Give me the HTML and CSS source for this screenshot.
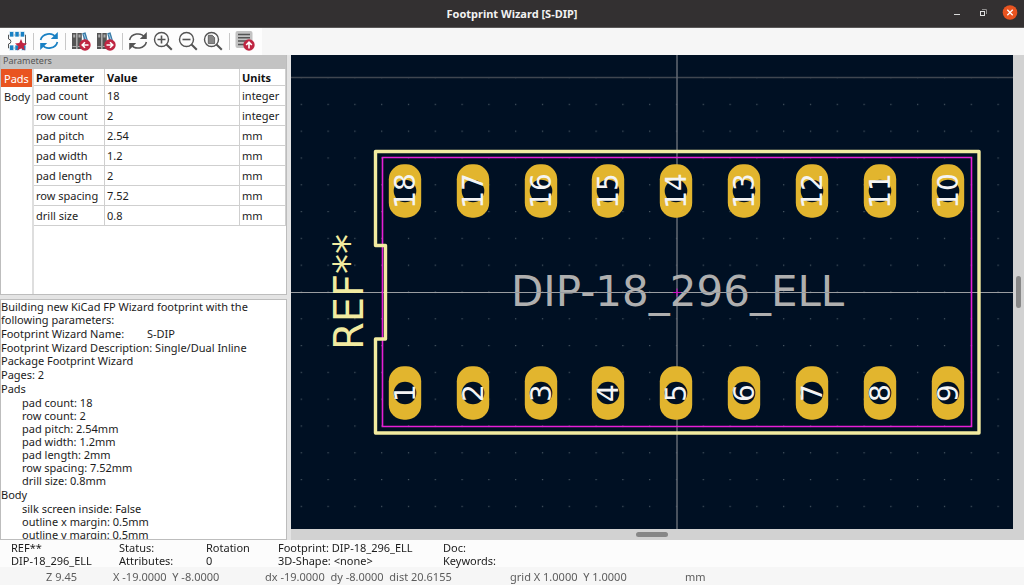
FILE: index.html
```html
<!DOCTYPE html>
<html lang="en">
<head>
<meta charset="utf-8">
<title>Footprint Wizard [S-DIP]</title>
<link rel="stylesheet" href="styles.css">
</head>
<body>
<div class="window">
  <header class="titlebar">
    <h1 class="title">Footprint Wizard [S-DIP]</h1>
    <div class="window-buttons">
      <button class="win-btn" aria-label="Minimize"><svg width="14" height="14" viewBox="0 0 14 14"><path d="M4 8.5h6" stroke="#d8d8d8" stroke-width="1"/></svg></button>
      <button class="win-btn" aria-label="Restore"><svg width="14" height="14" viewBox="0 0 14 14" fill="none"><path d="M6 3.500h4.500V8" stroke="#8f8d8d"/><rect x="4.500" y="5.500" width="4" height="4" stroke="#e0e0e0"/></svg></button>
      <button class="win-btn" aria-label="Close"><svg width="16" height="16" viewBox="0 0 16 16"><circle cx="8" cy="7.500" r="7.300" fill="#e95420"/><path d="M5.300 4.800l5.400 5.400M10.700 4.800l-5.400 5.400" stroke="#fff" stroke-width="1.300"/></svg></button>
    </div>
  </header>

  <nav class="toolbar" aria-label="Main toolbar">
    <button class="tool" aria-label="Select wizard script">
      <svg viewBox="0 0 20 20"><path d="M1.500 4h17v13h-17V13q2.400-.4 2.400-2.500T1.500 8z" fill="none" stroke="#555" stroke-width="1"/><g fill="#1a81c4" stroke="#fdfdfd" stroke-width=".7"><path d="M2.500 .5h4.300v5.500H2.500zM7.900 .5h4.300v5.500H7.900zM13.300 .5h4.300v5.500h-4.300zM2.500 14h4.300v5.500H2.500zM7.900 14h4.300v5.500H7.900zM14.500 14h4.300v5.500h-4.300z"/></g><path d="M14 8l1.700 4 4.300.4-3.200 2.800 1 4.300-3.800-2.300-3.700 2.300 1-4.300L8 12.400l4.300-.4z" fill="#bf2642"/></svg>
    </button>
    <span class="sep"></span>
    <button class="tool" aria-label="Reset parameters">
      <svg viewBox="0 0 20 20"><g fill="none" stroke="#1a81c4" stroke-width="1.700"><path d="M1.600 9A8.500 7.800 0 0 1 17 6.500M18.400 11A8.500 7.800 0 0 1 3 13.500"/></g><path d="M18.800 1v7h-7zM1.200 19v-7h7z" fill="#1a81c4"/></svg>
    </button>
    <span class="sep"></span>
    <button class="tool" aria-label="Previous page">
      <svg viewBox="0 0 20 20"><path d="M1 2h4.500v16H1zM6.300 2h4.500v16H6.300z" fill="#545454"/><path d="M2.200 3.500h2v3h-2zM7.500 3.500h2v3h-2z" fill="#aaa"/><path d="M1.500 15.500h3.500M6.800 15.500h3.500" stroke="#aaa"/><path d="M11.200 2.300l3.300-1L18 13l-3.500 2z" fill="#3a7ca8"/><path d="M13 3l2.500 7" stroke="#9fc8e3"/><circle cx="14" cy="14" r="5.700" fill="#bf2642"/><path d="M17.500 14h-6M14 11.200L11.200 14l2.800 2.800" fill="none" stroke="#fff" stroke-width="1.600"/></svg>
    </button>
    <button class="tool" aria-label="Next page">
      <svg viewBox="0 0 20 20"><path d="M1 2h4.500v16H1zM6.300 2h4.500v16H6.300z" fill="#545454"/><path d="M2.200 3.500h2v3h-2zM7.500 3.500h2v3h-2z" fill="#aaa"/><path d="M1.500 15.500h3.500M6.800 15.500h3.500" stroke="#aaa"/><path d="M11.200 2.300l3.300-1L18 13l-3.500 2z" fill="#3a7ca8"/><path d="M13 3l2.500 7" stroke="#9fc8e3"/><circle cx="14" cy="14" r="5.700" fill="#bf2642"/><path d="M10.500 14h6M14 11.200l2.800 2.800-2.800 2.800" fill="none" stroke="#fff" stroke-width="1.600"/></svg>
    </button>
    <span class="sep"></span>
    <button class="tool" aria-label="Refresh view">
      <svg viewBox="0 0 20 20"><g fill="none" stroke="#545454" stroke-width="1.500"><path d="M1.600 9A8.500 7.800 0 0 1 17 6.500M18.400 11A8.500 7.800 0 0 1 3 13.500"/></g><path d="M18.800 1v7h-7zM1.200 19v-7h7z" fill="#545454"/></svg>
    </button>
    <button class="tool" aria-label="Zoom in">
      <svg viewBox="0 0 20 20" fill="none" stroke="#545454"><circle cx="8.500" cy="8.500" r="7" stroke-width="1.400"/><path d="M8.500 4.500v8M4.500 8.500h8" stroke-width="1.600"/><path d="M13.500 13.500l5.300 5.300" stroke-width="2"/></svg>
    </button>
    <button class="tool" aria-label="Zoom out">
      <svg viewBox="0 0 20 20" fill="none" stroke="#545454"><circle cx="8.500" cy="8.500" r="7" stroke-width="1.400"/><path d="M4.500 8.500h8" stroke-width="1.600"/><path d="M13.500 13.500l5.300 5.300" stroke-width="2"/></svg>
    </button>
    <button class="tool" aria-label="Zoom to fit">
      <svg viewBox="0 0 20 20" fill="none" stroke="#545454"><circle cx="8.500" cy="8.500" r="7" stroke-width="1.400"/><path d="M5.300 4.300h4l2.300 2.300v6H5.300z" fill="#858585" stroke-width=".8"/><path d="M13.500 13.500l5.300 5.300" stroke-width="2"/></svg>
    </button>
    <span class="sep"></span>
    <button class="tool" aria-label="Export footprint to editor">
      <svg viewBox="0 0 20 20"><rect x=".5" y="0" width="17" height="17" rx="2" fill="#c2c2c2"/><path d="M3 3.500h12M3 6.800h12M3 10.100h9M3 13.400h6" stroke="#545454" stroke-width="1.500"/><circle cx="14" cy="14" r="5.700" fill="#bf2642"/><path d="M14 17.500v-6M11.200 14l2.800-2.800 2.800 2.800" fill="none" stroke="#fff" stroke-width="1.600"/></svg>
    </button>
  </nav>

  <main class="workspace">
    <aside class="side">
      <section class="params">
        <h2 class="caption">Parameters</h2>
        <div class="params-body">
          <div class="pages">
            <button class="page selected">Pads</button>
            <button class="page">Body</button>
          </div>
          <div class="grid-wrap">
            <table class="grid">
              <colgroup><col class="col-name"><col class="col-value"><col class="col-units"></colgroup>
              <thead><tr><th>Parameter</th><th>Value</th><th>Units</th></tr></thead>
              <tbody>
                <tr><td>pad count</td><td>18</td><td>integer</td></tr>
                <tr><td>row count</td><td>2</td><td>integer</td></tr>
                <tr><td>pad pitch</td><td>2.54</td><td>mm</td></tr>
                <tr><td>pad width</td><td>1.2</td><td>mm</td></tr>
                <tr><td>pad length</td><td>2</td><td>mm</td></tr>
                <tr><td>row spacing</td><td>7.52</td><td>mm</td></tr>
                <tr><td>drill size</td><td>0.8</td><td>mm</td></tr>
              </tbody>
            </table>
          </div>
        </div>
      </section>
      <section class="log" aria-label="Build messages">
        <p>Building new KiCad FP Wizard footprint with the<br>following parameters:</p>
        <p>Footprint Wizard Name: <span class="tabbed">S-DIP</span></p>
        <p>Footprint Wizard Description: Single/Dual Inline<br>Package Footprint Wizard</p>
        <p>Pages: 2</p>
        <p>Pads</p>
        <ul>
          <li>pad count: 18</li><li>row count: 2</li><li>pad pitch: 2.54mm</li><li>pad width: 1.2mm</li><li>pad length: 2mm</li><li>row spacing: 7.52mm</li><li>drill size: 0.8mm</li>
        </ul>
        <p>Body</p>
        <ul>
          <li>silk screen inside: False</li><li>outline x margin: 0.5mm</li><li>outline y margin: 0.5mm</li>
        </ul>
      </section>
    </aside>

    <section class="view">
      <svg class="board" viewBox="291 55 722 474" preserveAspectRatio="xMidYMid slice" role="img" aria-label="Footprint preview">
        <defs>
          <pattern id="dots" x="663" y="278.500" width="26.800" height="26.800" patternUnits="userSpaceOnUse"><rect x="12.900" y="12.900" width="1.200" height="1.200" fill="#4b5965"/></pattern>
          <g id="pad"><rect x="-16.200" y="-26.700" width="32.400" height="53.400" rx="15" fill="#e2b52e"/><circle r="11.300" fill="#001023"/></g>
        </defs>
        <rect x="291" y="55" width="722" height="474" fill="#001023"/>
        <rect x="291" y="55" width="722" height="474" fill="url(#dots)"/>
        <path d="M291 77.500h722" stroke="#3f4650" stroke-width="1.500"/>
        <path d="M677 55v474" stroke="#626973" stroke-width="1.500"/>
        <text class="fab" x="511" y="306">DIP-18_296_ELL</text>
        <path d="M291 292.500h722" stroke="#9a9da1"/>
        <path d="M382.500 157.500h589v269h-589z" fill="none" stroke="#e61fd6" stroke-width="1.600"/>
        <path d="M375.500 151.500h603.500V433H375.500V339h10V245.500h-10z" fill="none" stroke="#f2eba0" stroke-width="3.400" stroke-linejoin="round"/>
        <path d="M673 292.500h8M677 288.500v8" stroke="#d010c8"/>
        <text class="silk" transform="translate(363 350) rotate(-90)">REF**</text>
        <g class="pads">
          <g transform="translate(405 191)"><use href="#pad"/><text transform="rotate(-90)" y="10">18</text></g>
          <g transform="translate(473 191)"><use href="#pad"/><text transform="rotate(-90)" y="10">17</text></g>
          <g transform="translate(541 191)"><use href="#pad"/><text transform="rotate(-90)" y="10">16</text></g>
          <g transform="translate(608 191)"><use href="#pad"/><text transform="rotate(-90)" y="10">15</text></g>
          <g transform="translate(676 191)"><use href="#pad"/><text transform="rotate(-90)" y="10">14</text></g>
          <g transform="translate(744 191)"><use href="#pad"/><text transform="rotate(-90)" y="10">13</text></g>
          <g transform="translate(812 191)"><use href="#pad"/><text transform="rotate(-90)" y="10">12</text></g>
          <g transform="translate(880 191)"><use href="#pad"/><text transform="rotate(-90)" y="10">11</text></g>
          <g transform="translate(948 191)"><use href="#pad"/><text transform="rotate(-90)" y="10">10</text></g>
          <g transform="translate(405 393)"><use href="#pad"/><text transform="rotate(-90)" y="10">1</text></g>
          <g transform="translate(473 393)"><use href="#pad"/><text transform="rotate(-90)" y="10">2</text></g>
          <g transform="translate(541 393)"><use href="#pad"/><text transform="rotate(-90)" y="10">3</text></g>
          <g transform="translate(608 393)"><use href="#pad"/><text transform="rotate(-90)" y="10">4</text></g>
          <g transform="translate(676 393)"><use href="#pad"/><text transform="rotate(-90)" y="10">5</text></g>
          <g transform="translate(744 393)"><use href="#pad"/><text transform="rotate(-90)" y="10">6</text></g>
          <g transform="translate(812 393)"><use href="#pad"/><text transform="rotate(-90)" y="10">7</text></g>
          <g transform="translate(880 393)"><use href="#pad"/><text transform="rotate(-90)" y="10">8</text></g>
          <g transform="translate(948 393)"><use href="#pad"/><text transform="rotate(-90)" y="10">9</text></g>
        </g>
      </svg>
      <div class="vscroll"><span class="thumb"></span></div>
      <div class="hscroll"><span class="thumb"></span></div>
    </section>
  </main>

  <section class="info">
    <div><p>REF**</p><p>DIP-18_296_ELL</p></div>
    <div><p>Status:</p><p>Attributes:</p></div>
    <div><p>Rotation</p><p>0</p></div>
    <div><p>Footprint: DIP-18_296_ELL</p><p>3D-Shape: &lt;none&gt;</p></div>
    <div><p>Doc:</p><p>Keywords:</p></div>
  </section>
  <footer class="status">
    <span>Z 9.45</span><span>X -19.0000&nbsp; Y -8.0000</span><span>dx -19.0000&nbsp; dy -8.0000&nbsp; dist 20.6155</span><span>grid X 1.0000&nbsp; Y 1.0000</span><span>mm</span>
  </footer>
</div>
</body>
</html>
```
FILE: styles.css
```css
* { box-sizing: border-box; }
body, h1, h2, p, ul { margin: 0; padding: 0; }
body {
  font-family: "Noto Sans", "Open Sans", sans-serif;
  font-size: 11px;
  line-height: 13px;
  color: #1c1c1c;
  background: #f6f6f6;
}
button { font: inherit; color: inherit; border: 0; padding: 0; background: none; }
ul { list-style: none; }
svg { display: block; }

.window { display: flex; flex-direction: column; height: 100vh; }

.titlebar {
  display: grid;
  grid-template-columns: 1fr auto 1fr;
  align-items: center;
  height: 28px;
  padding-bottom: 1px;
  background: #333031;
  border-bottom: 1px solid #5a5858;
  color: #f2f2f2;
}
.title { grid-column: 2; font-size: 11px; font-weight: 700; }
.window-buttons { display: flex; justify-content: flex-end; align-items: center; gap: 12px; padding-right: 6px; }

.toolbar {
  display: flex;
  align-items: center;
  height: 27px;
  padding: 0 0 1px 5px;
  background: linear-gradient(90deg, #fdfdfd 262px, #f6f6f6 262px);
}
.tool { width: 25px; padding: 0 2px; }
.tool svg { width: 20px; height: 20px; }
.sep { width: 1px; height: 17px; margin: 0 3px; background: #c8c8c8; }

.workspace { flex: 1; display: flex; min-height: 0; background: #e4e4e4; }
.side { display: flex; flex-direction: column; gap: 4px; width: 287px; margin-right: 4px; }
.params { display: flex; flex-direction: column; height: 240px; background: #fff; border: solid #bdbdbd; border-width: 0 1px 1px; }
.caption { height: 14px; padding-left: 2px; background: #c3c3c3; color: #555; font-size: 9px; font-weight: 400; line-height: 12px; }
.params-body { flex: 1; display: flex; }
.pages { display: flex; flex-direction: column; width: 31px; }
.page { height: 18px; padding-left: 3px; text-align: left; }
.selected { background: #e95420; color: #fff; }
.grid-wrap { flex: 1; border-left: 2px solid #dedede; }
.grid { width: 100%; table-layout: fixed; border-collapse: separate; border-spacing: 0; }
.grid th, .grid td { height: 20px; padding: 0 2px; border: solid #cfcfcf; border-width: 0 1px 1px 0; text-align: left; white-space: nowrap; }
.grid td { padding-bottom: 1px; }
.grid th { height: 17px; color: #111; }
.col-name { width: 71px; }
.col-units { width: 46px; }

.log {
  flex: 1;
  min-height: 0;
  overflow-y: auto;
  scrollbar-width: none;
  border: 1px solid #bdbdbd;
  background: #fff;
  white-space: nowrap;
}
.log > * { margin-bottom: 1px; }
.log ul { padding-left: 21px; }
.tabbed { margin-left: 20px; }

.view { flex: 1; min-width: 0; display: grid; grid-template-columns: 1fr 11px; grid-template-rows: 1fr 11px; background: #d2d2d2; }
.board { width: 100%; height: 100%; min-height: 0; }
.board text { font-family: "DejaVu Sans", sans-serif; }
.fab { font-size: 42px; fill: #afafaf; }
.silk { font-size: 40px; fill: #f2eba0; }
.pads text { font-size: 28px; fill: #f4f4f4; text-anchor: middle; }
.vscroll, .hscroll { display: flex; align-items: center; justify-content: center; }
.thumb { border-radius: 3px; background: #878787; }
.vscroll .thumb { width: 5px; height: 32px; }
.hscroll .thumb { width: 32px; height: 5px; }

.info {
  display: grid;
  grid-template-columns: 108px 87px 72px 165px 1fr;
  padding: 1px 0 0 11px;
  height: 27px;
  background: #fcfcfc;
  white-space: nowrap;
}
.status {
  display: grid;
  grid-template-columns: 67px 152px 245px 175px 1fr;
  align-items: center;
  height: 18px;
  padding-left: 46px;
  color: #5c5c5c;
  white-space: nowrap;
}
```
